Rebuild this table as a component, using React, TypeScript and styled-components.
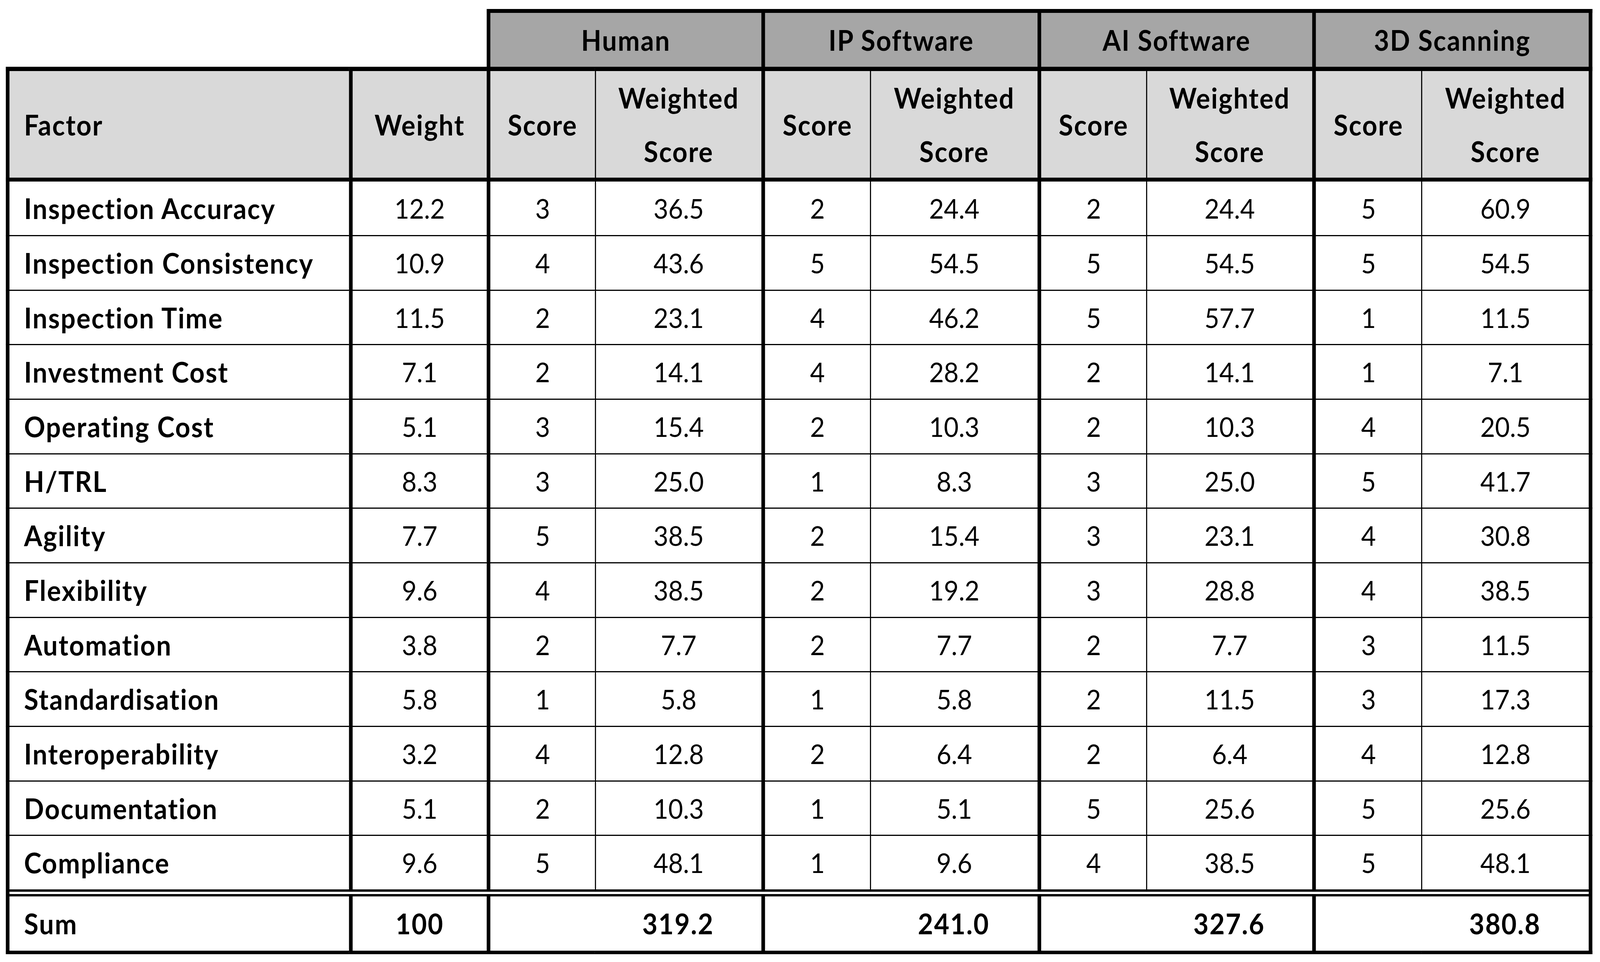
import React, { useLayoutEffect, useState } from "react";
import styled, { createGlobalStyle } from "styled-components";

const GlobalStyle = createGlobalStyle`
  html, body {
    margin: 0;
    padding: 0;
    background: #ffffff;
  }
  * { box-sizing: border-box; }
`;

const DESIGN_W = 4392;
const COLS = "942px 378px 297px 457px 298px 460px 298px 456px 299px 470px";
const LEFT = [10, 10, 10, 3, 10, 3, 10, 3, 10, 3];
const FONT = `"Lato", "Liberation Sans", sans-serif`;

const Page = styled.div`
  width: 100vw;
  height: 2464px;
  overflow: hidden;
  background: #ffffff;
`;

const Canvas = styled.div`
  width: ${DESIGN_W}px;
  height: 2464px;
  padding: 23px 0 0 16px;
  transform-origin: 0 0;
`;

const Table = styled.div`
  display: flex;
  flex-direction: column;
  width: 4355px;
  font-family: ${FONT};
  color: #000;
`;

const Row = styled.div<{ $h: number }>`
  display: grid;
  grid-template-columns: ${COLS};
  height: ${(p) => p.$h}px;
`;

const Spacer = styled.div`
  grid-column: span 2;
  background: #fff;
`;

const GroupCell = styled.div<{ $last?: boolean }>`
  grid-column: span 2;
  background: #a6a6a6;
  border-top: 10px solid #000;
  border-left: 10px solid #000;
  border-right: ${(p) => (p.$last ? "10px solid #000" : "0")};
  display: flex;
  align-items: center;
  justify-content: center;
  font-size: 72px;
  font-weight: 700;
  letter-spacing: 2.5px;
  white-space: nowrap;
`;

const Cell = styled.div<{
  $lw: number;
  $rw?: number;
  $tw: number;
  $bw?: number;
  $bg?: string;
  $left?: boolean;
  $bold?: boolean;
}>`
  background: ${(p) => p.$bg || "#fff"};
  border-left: ${(p) => p.$lw}px solid #000;
  border-right: ${(p) => p.$rw || 0}px solid #000;
  border-top: ${(p) => p.$tw}px solid #000;
  border-bottom: ${(p) => p.$bw || 0}px solid #000;
  display: flex;
  align-items: center;
  justify-content: ${(p) => (p.$left ? "flex-start" : "center")};
  padding-left: ${(p) => (p.$left ? "40px" : "0")};
  font-size: ${(p) => (p.$bold ? 72 : 70)}px;
  font-weight: ${(p) => (p.$bold ? 700 : 400)};
  letter-spacing: ${(p) => (p.$bold ? "2.5px" : "0")};
  line-height: 137px;
  text-align: center;
  white-space: nowrap;
`;

const Divider = styled.div`
  height: 18px;
  width: 4355px;
  border-top: 6px solid #000;
  border-bottom: 6px solid #000;
  border-left: 10px solid #000;
  border-right: 10px solid #000;
  background: #fff;
`;

const groups = ["Human", "IP Software", "AI Software", "3D Scanning"];

type RowData = [string, string, number, string, number, string, number, string, number, string];

const rows: RowData[] = [
  ["Inspection Accuracy", "12.2", 3, "36.5", 2, "24.4", 2, "24.4", 5, "60.9"],
  ["Inspection Consistency", "10.9", 4, "43.6", 5, "54.5", 5, "54.5", 5, "54.5"],
  ["Inspection Time", "11.5", 2, "23.1", 4, "46.2", 5, "57.7", 1, "11.5"],
  ["Investment Cost", "7.1", 2, "14.1", 4, "28.2", 2, "14.1", 1, "7.1"],
  ["Operating Cost", "5.1", 3, "15.4", 2, "10.3", 2, "10.3", 4, "20.5"],
  ["H/TRL", "8.3", 3, "25.0", 1, "8.3", 3, "25.0", 5, "41.7"],
  ["Agility", "7.7", 5, "38.5", 2, "15.4", 3, "23.1", 4, "30.8"],
  ["Flexibility", "9.6", 4, "38.5", 2, "19.2", 3, "28.8", 4, "38.5"],
  ["Automation", "3.8", 2, "7.7", 2, "7.7", 2, "7.7", 3, "11.5"],
  ["Standardisation", "5.8", 1, "5.8", 1, "5.8", 2, "11.5", 3, "17.3"],
  ["Interoperability", "3.2", 4, "12.8", 2, "6.4", 2, "6.4", 4, "12.8"],
  ["Documentation", "5.1", 2, "10.3", 1, "5.1", 5, "25.6", 5, "25.6"],
  ["Compliance", "9.6", 5, "48.1", 1, "9.6", 4, "38.5", 5, "48.1"],
];

const sums = ["Sum", "100", "", "319.2", "", "241.0", "", "327.6", "", "380.8"];

const headers: React.ReactNode[] = [
  "Factor",
  "Weight",
  ...groups.flatMap(() => [
    "Score",
    <>
      Weighted
      <br />
      Score
    </>,
  ]),
];

function useFitScale() {
  const [scale, setScale] = useState(1);
  useLayoutEffect(() => {
    const update = () => setScale(Math.min(1, window.innerWidth / DESIGN_W));
    update();
    window.addEventListener("resize", update);
    return () => window.removeEventListener("resize", update);
  }, []);
  return scale;
}

export default function App() {
  const scale = useFitScale();
  return (
    <>
      <GlobalStyle />
      <Page>
        <Canvas style={{ transform: `scaleX(${scale})` }}>
          <Table>
            <Row $h={148}>
              <Spacer />
              {groups.map((g, i) => (
                <GroupCell key={g} $last={i === groups.length - 1}>
                  {g}
                </GroupCell>
              ))}
            </Row>
            <Row $h={284}>
              {headers.map((h, i) => (
                <Cell
                  key={i}
                  $lw={LEFT[i]}
                  $rw={i === 9 ? 10 : 0}
                  $tw={11}
                  $bg="#d9d9d9"
                  $left={i === 0}
                  $bold
                >
                  <div>{h}</div>
                </Cell>
              ))}
            </Row>
            {rows.map((r, ri) => (
              <Row key={r[0]} $h={ri === 0 ? 147 : 139.67}>
                {r.map((v, i) => (
                  <Cell
                    key={i}
                    $lw={LEFT[i]}
                    $rw={i === 9 ? 10 : 0}
                    $tw={ri === 0 ? 10 : 3}
                    $left={i === 0}
                    $bold={i === 0}
                  >
                    {v}
                  </Cell>
                ))}
              </Row>
            ))}
            <Divider />
            <Row $h={148}>
              {sums.map((v, i) => (
                <Cell
                  key={i}
                  $lw={i >= 3 && i % 2 === 1 ? 0 : LEFT[i]}
                  $rw={i === 9 ? 10 : 0}
                  $tw={0}
                  $bw={9}
                  $left={i === 0}
                  $bold
                >
                  {v}
                </Cell>
              ))}
            </Row>
          </Table>
        </Canvas>
      </Page>
    </>
  );
}
